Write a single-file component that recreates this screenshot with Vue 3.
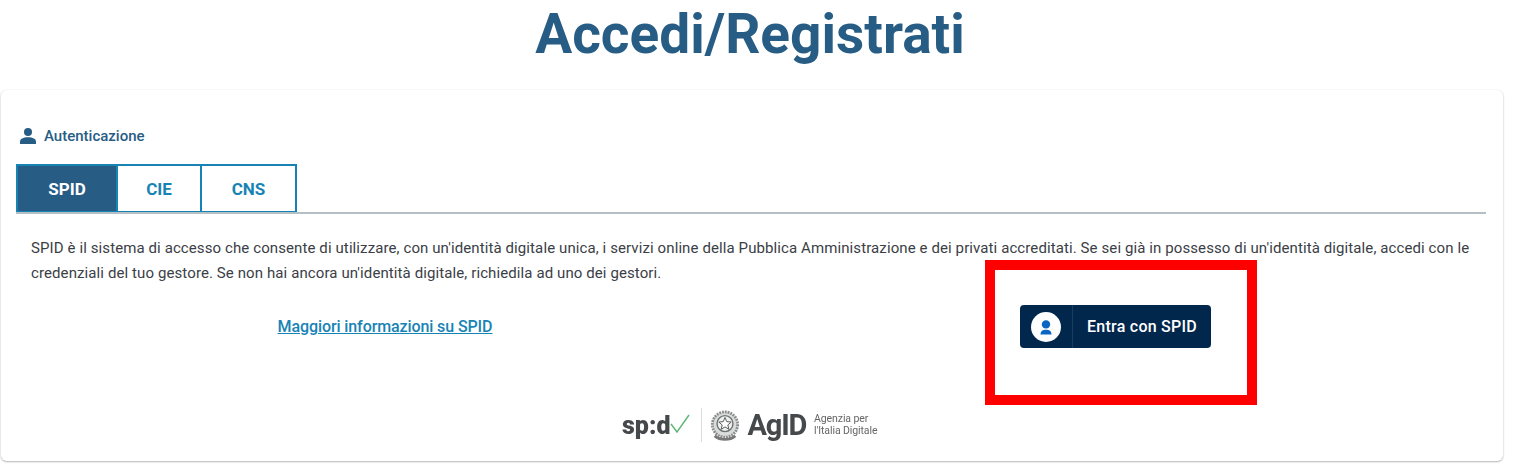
<script setup>
const tabs = [
  { label: 'SPID', active: true, width: '102px' },
  { label: 'CIE', active: false, width: '86px' },
  { label: 'CNS', active: false, width: '97px' },
]
</script>

<template>
  <div class="page">
    <h1 class="title">Accedi/Registrati</h1>
    <section class="card">
      <div class="auth">
        <svg class="user" viewBox="0 0 18 18" width="18" height="18" aria-hidden="true">
          <circle cx="9" cy="5" r="4" fill="#275d85" />
          <path d="M1 17v-2.2C1 11.8 4.2 10.3 9 10.3s8 1.500 8 4.500V17z" fill="#275d85" />
        </svg>
        <span>Autenticazione</span>
      </div>
      <div class="tabs">
        <div
          v-for="tab in tabs"
          :key="tab.label"
          class="tab"
          :class="{ active: tab.active }"
          :style="{ width: tab.width }"
        >{{ tab.label }}</div>
      </div>
      <p class="text">SPID è il sistema di accesso che consente di utilizzare, con un'identità digitale unica, i servizi online della Pubblica Amministrazione e dei privati accreditati. Se sei già in possesso di un'identità digitale, accedi con le credenziali del tuo gestore. Se non hai ancora un'identità digitale, richiedila ad uno dei gestori.</p>
      <div class="actions">
        <div class="col"><a class="more" href="#">Maggiori informazioni su SPID</a></div>
        <div class="col">
          <div class="btn">
            <span class="btn-icon">
              <svg viewBox="0 0 30 30" width="30" height="30" aria-hidden="true">
                <circle cx="15" cy="15" r="15" fill="#fff" />
                <circle cx="15" cy="12.4" r="4.200" fill="#0a66c2" />
                <path d="M9.500 22.500c0-3.400 2.300-4.800 5.500-4.800s5.500 1.400 5.500 4.800z" fill="#0a66c2" />
              </svg>
            </span>
            <span class="btn-label">Entra con SPID</span>
          </div>
        </div>
      </div>
      <div class="logos">
        <span class="spid">sp<span class="colon">:</span>d</span>
        <svg class="check" viewBox="0 0 20 20" width="20" height="20" aria-hidden="true">
          <path d="M1 10l6 8L19 1" fill="none" stroke="#5fb87a" stroke-width="1.500" />
        </svg>
        <span class="sep"></span>
        <svg class="emblem" viewBox="0 0 32 34" width="30" height="33" aria-hidden="true">
          <circle cx="16" cy="16" r="13.500" fill="#dadcdc" stroke="#8a8e8e" stroke-width="3" stroke-dasharray="2 1" />
          <circle cx="16" cy="15" r="8.500" fill="#eef0f0" stroke="#6e7272" stroke-width="1.500" />
          <path d="M16 8.500l1.900 4.400 4.700.4-3.600 3.100 1.100 4.600-4.100-2.500-4.100 2.500 1.100-4.600-3.600-3.100 4.700-.4z" fill="#fff" stroke="#555" stroke-width="1" />
          <path d="M5 28c6 5 16 5 22 0" fill="none" stroke="#777" stroke-width="3" />
        </svg>
        <span class="agid">AgID</span>
        <span class="agency">Agenzia per<br />l'Italia Digitale</span>
      </div>
      <div class="highlight"></div>
    </section>
  </div>
</template>

<style>
html, body { margin: 0; background: #fff; overflow: hidden; }
</style>

<style scoped>
.page {
  width: 1503px;
  height: 468px;
  font-family: Roboto, "Noto Sans", sans-serif;
  color: #33383c;
  box-sizing: border-box;
  position: relative;
}
.title {
  margin: 0;
  height: 90px;
  padding: 5px 3px 0 0;
  box-sizing: border-box;
  text-align: center;
  font-size: 55px;
  line-height: 58px;
  font-weight: 700;
  letter-spacing: 0;
  color: #275d85;
}
.card {
  position: relative;
  margin-left: 1px;
  height: 371px;
  border-radius: 6px;
  background: #fff;
  box-shadow: 0 1px 2px rgba(0, 0, 0, .28), 0 0 3px rgba(0, 0, 0, .05);
  box-sizing: border-box;
  padding: 36px 17px 0 15px;
}
.auth {
  display: flex;
  align-items: center;
  gap: 7px;
  height: 20px;
  padding-left: 3px;
  font-size: 15px;
  font-weight: 500;
  letter-spacing: 0;
  color: #275d85;
}
.tabs {
  display: flex;
  margin-top: 18px;
  height: 50px;
  border-bottom: 2px solid #b4c0c4;
  box-sizing: border-box;
}
.tab {
  height: 48px;
  box-sizing: border-box;
  border: 2px solid #1783b5;
  border-bottom-width: 1px;
  margin-right: -2px;
  display: flex;
  align-items: center;
  justify-content: center;
  font-size: 17px;
  font-weight: 700;
  color: #1783b5;
}
.tab.active {
  background: #275d85;
  color: #fff;
}
.text {
  margin: 22px 0 0;
  padding: 0 0 0 15px;
  font-size: 15px;
  line-height: 25px;
  letter-spacing: 0.1px;
  color: #3a4046;
}
.actions {
  display: grid;
  grid-template-columns: 738px 723px;
  margin-top: 19px;
}
.col {
  display: flex;
  justify-content: center;
  height: 43px;
  align-items: center;
}
.more {
  font-size: 16px;
  font-weight: 500;
  letter-spacing: -0.1px;
  color: #1783b5;
  text-decoration: underline;
}
.btn {
  width: 191px;
  height: 43px;
  border-radius: 4px;
  background: #02274d;
  display: flex;
  align-items: center;
  color: #fff;
}
.btn-icon {
  width: 53px;
  height: 100%;
  box-sizing: border-box;
  border-right: 1px solid #173d61;
  display: flex;
  align-items: center;
  justify-content: center;
}
.btn-label {
  flex: 1;
  text-align: center;
  font-size: 16px;
  font-weight: 500;
  letter-spacing: 0.25px;
}
.logos {
  display: flex;
  align-items: center;
  margin-top: 59px;
  height: 36px;
  padding-left: 606px;
  filter: blur(0.4px);
}
.spid {
  font-size: 25px;
  font-weight: 900;
  letter-spacing: 0;
  color: #45494c;
  line-height: 1;
}
.check { margin-left: 0; margin-bottom: 2px; }
.sep {
  width: 1px;
  height: 34px;
  background: #dcdcdc;
  margin: 0 8px 0 11px;
}
.emblem { margin-right: 7px; }
.agid {
  font-size: 29px;
  font-weight: 700;
  color: #45494c;
  letter-spacing: -1.200px;
}
.agency {
  font-size: 10.500px;
  line-height: 12px;
  margin-left: 8px;
  letter-spacing: -0.1px;
  color: #666;
}
.highlight {
  position: absolute;
  left: 984px;
  top: 170px;
  width: 272px;
  height: 145px;
  box-sizing: border-box;
  border: 10px solid #ff0000;
}
</style>
